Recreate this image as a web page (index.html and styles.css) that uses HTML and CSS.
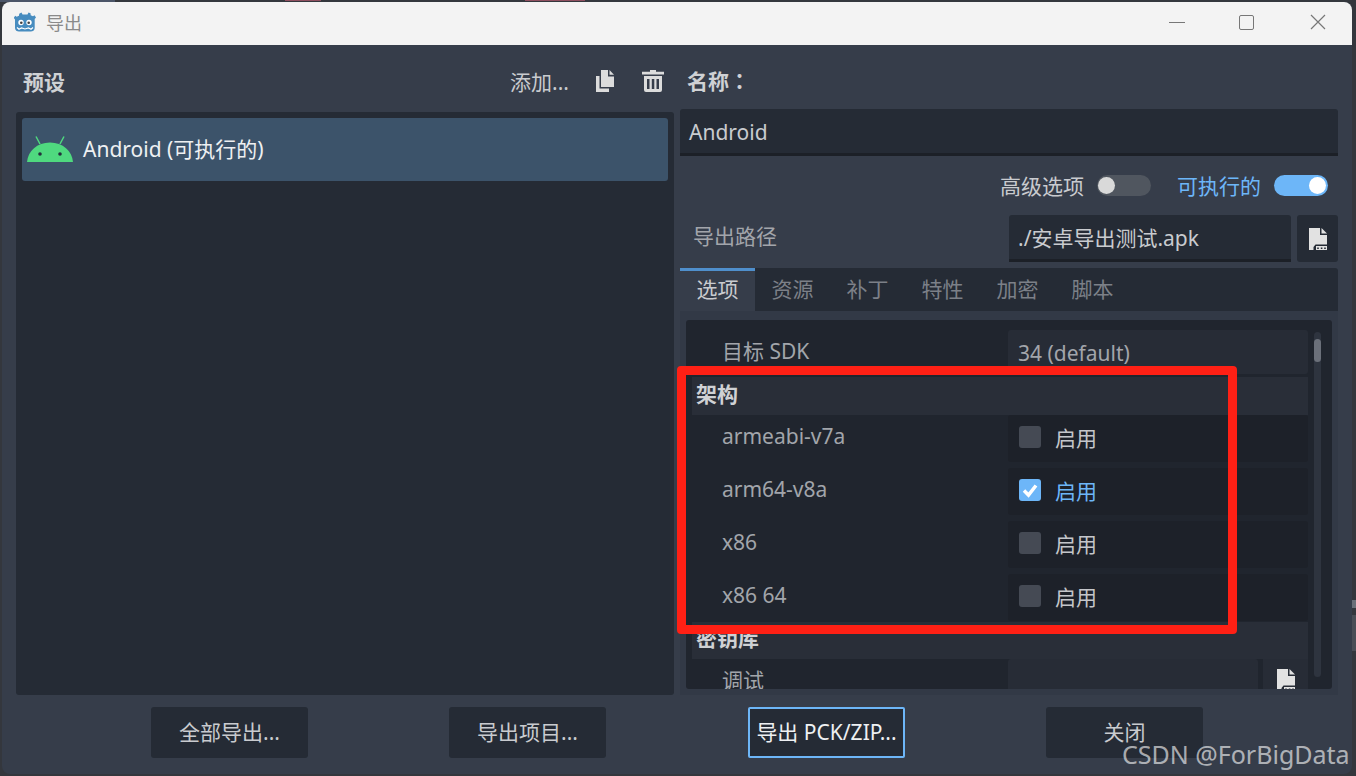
FILE: index.html
```html
<!DOCTYPE html>
<html lang="zh-CN">
<head>
    <meta charset="UTF-8">
    <title>导出</title>
    <link rel="stylesheet" href="styles.css">
</head>
<body>
<svg class="defs" width="0" height="0">
    <symbol id="icon-file" viewBox="0 0 18 22">
        <path d="M0 0H11V7H18V16.500H6.500L4.500 19V22H0Z"/>
        <path d="M12.500 0L18 5.500H12.500Z"/>
        <path d="M7 18H18V22H7Z M8.200 19.500v1.400h1.600v-1.400Z M11.800 19.500v1.400h1.600v-1.400Z M15.200 19.500v1.400h1.600v-1.400Z" fill-rule="evenodd"/>
    </symbol>
</svg>

<div class="window">
    <div class="titlebar">
        <svg class="app-logo" viewBox="0 0 22 20">
            <path fill="#478cbf" d="M7.500 0.500l1 2h5l1-2 2 .8.2 2 2.300 1 1.500-1 1.500 2.200-1.300 1.500V16c0 2.500-2 3.500-4 3.500H5c-2 0-4-1-4-3.500V7.500L-.3 6 1.200 3.800l1.500 1 2.300-1 .2-2Z"/>
            <circle cx="7" cy="10.500" r="2.700" fill="#fff"/>
            <circle cx="15" cy="10.500" r="2.700" fill="#fff"/>
            <circle cx="7.300" cy="10.700" r="1.300" fill="#414042"/>
            <circle cx="14.700" cy="10.700" r="1.300" fill="#414042"/>
            <path fill="none" stroke="#fff" stroke-width="1.200" d="M3 15.500l2 1.800 2.500-1.300 3.500 1 3.500-1 2.500 1.300 2-1.800"/>
        </svg>
        <span class="window-title">导出</span>
        <div class="window-controls">
            <span class="ctl-min"></span>
            <span class="ctl-max"></span>
            <svg class="ctl-close" viewBox="0 0 16 16"><path d="M1 1L15 15M15 1L1 15"/></svg>
        </div>
    </div>

    <div class="content">
        <div class="columns">
            <!-- 预设 -->
            <div class="col-left">
                <div class="preset-head">
                    <strong class="heading">预设</strong>
                    <span class="add-btn">添加...</span>
                    <svg class="tool-icon copy" viewBox="0 0 18 22">
                        <path d="M5 0H12V6.500H18V17H5Z"/>
                        <path d="M13.500 0L18 4.800H13.500Z"/>
                        <path d="M0 6H3.500V18.500H13V22H0Z"/>
                    </svg>
                    <svg class="tool-icon trash" viewBox="0 0 22 22">
                        <path d="M8 0H14V1.800H22V4.500H0V1.800H8Z"/>
                        <path fill-rule="evenodd" d="M2 6H20V20a2 2 0 0 1-2 2H4a2 2 0 0 1-2-2Z M5 9V19H7.500V9Z M9.800 9V19H12.300V9Z M14.500 9V19H17V9Z"/>
                    </svg>
                </div>
                <div class="preset-list">
                    <div class="preset-item">
                        <svg class="android" viewBox="0 0 46 26">
                            <path fill="#4fd97f" d="M0 26C1 15 10 6.500 23 6.500S45 15 46 26Z"/>
                            <path stroke="#4fd97f" stroke-width="1.500" d="M9 0.500L13 8M37 0.500L33 8"/>
                            <circle cx="13" cy="18" r="1.800" fill="#24303c"/>
                            <circle cx="33" cy="18" r="1.800" fill="#24303c"/>
                        </svg>
                        <span>Android (可执行的)</span>
                    </div>
                </div>
            </div>

            <!-- 右侧 -->
            <div class="col-right">
                <strong class="heading name-label">名称<span class="colon" lang="zh-TW">：</span></strong>
                <div class="line-edit name-edit">Android</div>

                <div class="toggles">
                    <span class="toggle-text">高级选项</span>
                    <span class="switch"></span>
                    <span class="toggle-text is-on">可执行的</span>
                    <span class="switch is-on"></span>
                </div>

                <div class="path-row">
                    <span class="path-label">导出路径</span>
                    <div class="line-edit path-edit">./安卓导出测试.apk</div>
                    <div class="file-btn"><svg class="file-icon"><use href="#icon-file"/></svg></div>
                </div>

                <div class="tabs">
                    <span class="tab active">选项</span>
                    <span class="tab">资源</span>
                    <span class="tab">补丁</span>
                    <span class="tab">特性</span>
                    <span class="tab">加密</span>
                    <span class="tab">脚本</span>
                </div>

                <div class="tab-panel">
                    <div class="tree">
                        <div class="tree-body">
                            <div class="row">
                                <span class="row-label">目标 SDK</span>
                                <div class="row-value value-light sdk-value">34 (default)</div>
                            </div>

                            <div class="section first">架构</div>
                            <div class="arch-rows">
                                <div class="row arch">
                                    <span class="row-label">armeabi-v7a</span>
                                    <div class="row-value"><span class="check"></span>启用</div>
                                </div>
                                <div class="row arch">
                                    <span class="row-label">arm64-v8a</span>
                                    <div class="row-value is-on">
                                        <span class="check checked"><svg viewBox="0 0 22 22"><path d="M5 11.500L9.500 16L17 6.500"/></svg></span>启用
                                    </div>
                                </div>
                                <div class="row arch">
                                    <span class="row-label">x86</span>
                                    <div class="row-value"><span class="check"></span>启用</div>
                                </div>
                                <div class="row arch">
                                    <span class="row-label">x86 64</span>
                                    <div class="row-value"><span class="check"></span>启用</div>
                                </div>
                            </div>

                            <div class="section second">密钥库</div>
                            <div class="row debug">
                                <span class="row-label">调试</span>
                                <div class="row-value value-light"></div>
                                <div class="debug-btn"><svg class="file-icon"><use href="#icon-file"/></svg></div>
                            </div>
                        </div>
                        <div class="scrollbar"><span class="grabber"></span></div>
                    </div>
                </div>
            </div>
        </div>

        <div class="actions">
            <span class="btn">全部导出...</span>
            <span class="btn">导出项目...</span>
            <span class="btn focused">导出 PCK/ZIP...</span>
            <span class="btn">关闭</span>
        </div>
    </div>
</div>

<!-- 截图上的标注 -->
<div class="red-box"></div>
<div class="watermark">CSDN @ForBigData</div>
</body>
</html>
```

FILE: styles.css
```css
:root {
    --bg: #363d4a;
    --dark: #252b35;
    --tree: #20252e;
    --text: #c9cbcf;
    --muted: #a2a5ab;
    --blue: #6db6f8;
}

* {
    margin: 0;
    padding: 0;
    box-sizing: border-box;
}

/* 窗口后面露出的编辑器 */
body {
    position: relative;
    width: 1356px;
    height: 776px;
    overflow: hidden;
    padding: 2px 4px 2px 2px;
    background:
        linear-gradient(#8f4f5f, #8f4f5f) 285px 0 / 36px 1px no-repeat,
        linear-gradient(#8f4f5f, #8f4f5f) 525px 0 / 60px 1px no-repeat,
        linear-gradient(#4b5568, #4b5568) 0 0 / 115px 2px no-repeat,
        linear-gradient(#6a6f78, #6a6f78) 1352px 600px / 4px 8px no-repeat,
        linear-gradient(#4a4e56, #4a4e56) 1352px 615px / 4px 36px no-repeat,
        #34373d;
    font-family: "Noto Sans", "Noto Sans CJK SC", sans-serif;
    font-size: 21px;
    color: var(--text);
}

.defs {
    position: absolute;
}

.window {
    width: 1350px;
    height: 772px;
    border-radius: 8px;
    overflow: hidden;
    background: var(--bg);
}

/* 标题栏 */
.titlebar {
    display: flex;
    align-items: center;
    height: 43px;
    padding: 0 0 3px 12px;
    background: #f3f3f3;
}

.app-logo {
    width: 22px;
    height: 20px;
}

.window-title {
    margin-left: 10px;
    font-size: 18px;
    color: #8a8a8a;
}

.window-controls {
    display: flex;
    align-items: center;
    margin-left: auto;
    padding-right: 26px;
}

.ctl-min {
    width: 16px;
    height: 1px;
    background: #777;
    margin-right: 54px;
}

.ctl-max {
    width: 15px;
    height: 15px;
    border: 1.500px solid #777;
    border-radius: 2px;
    margin-right: 56px;
}

.ctl-close {
    width: 16px;
    height: 16px;
    fill: none;
    stroke: #777;
    stroke-width: 1.200;
}

/* 内容 */
.content {
    display: flex;
    flex-direction: column;
    height: 729px;
    padding: 15px 14px 0;
}

.columns {
    display: flex;
    gap: 6px;
    height: 635px;
}

.col-left {
    display: flex;
    flex-direction: column;
    width: 658px;
}

.col-right {
    display: flex;
    flex-direction: column;
    width: 658px;
}

.heading {
    color: #cfd1d4;
    font-size: 21px;
}

.colon {
    font-family: "Noto Sans CJK TC", sans-serif;
}

.preset-head {
    display: flex;
    align-items: center;
    height: 52px;
    padding: 0 10px 10px 7px;
}

.add-btn {
    margin-left: auto;
    margin-right: 27px;
}

.tool-icon {
    fill: #dcdcdc;
    height: 22px;
}

.tool-icon.copy {
    width: 18px;
    margin-right: 28px;
}

.tool-icon.trash {
    width: 22px;
}

.preset-list {
    flex: 1;
    padding: 6px;
    background: var(--dark);
    border-radius: 3px;
}

.preset-item {
    display: flex;
    align-items: center;
    height: 63px;
    padding: 0 0 4px 5px;
    background: #3c536a;
    border-radius: 3px;
    color: #eef0f2;
}

.android {
    width: 46px;
    height: 26px;
    margin-right: 10px;
    margin-top: 3px;
}

.name-label {
    height: 49px;
    padding: 5px 0 0 7px;
}

.line-edit {
    display: flex;
    align-items: center;
    background: var(--dark);
    border-bottom: 3px solid #1c2027;
    border-radius: 3px 3px 0 0;
}

.name-edit {
    height: 47px;
    padding: 2px 0 0 9px;
}

.toggles {
    display: flex;
    align-items: center;
    justify-content: flex-end;
    height: 26px;
    margin-top: 16px;
    padding-right: 10px;
}

.toggle-text {
    margin-right: 13px;
}

.toggle-text.is-on {
    color: var(--blue);
}

.switch {
    position: relative;
    width: 54px;
    height: 21px;
    margin-right: 26px;
    border-radius: 11px;
    background: #50565f;
}

.switch::after {
    content: "";
    position: absolute;
    top: 2px;
    left: 1px;
    width: 17px;
    height: 17px;
    border-radius: 50%;
    background: #d9d9d9;
}

.switch.is-on {
    margin-right: 0;
    background: var(--blue);
}

.switch.is-on::after {
    left: auto;
    right: 2px;
    background: #fff;
}

.path-row {
    display: flex;
    height: 47px;
    margin-top: 17px;
}

.path-label {
    width: 329px;
    padding: 5px 0 0 13px;
    color: var(--muted);
}

.path-edit {
    width: 282px;
    padding-left: 9px;
}

.file-btn {
    display: flex;
    align-items: center;
    justify-content: center;
    width: 41px;
    margin-left: 6px;
    background: var(--dark);
    border-radius: 3px;
}

.file-icon {
    width: 18px;
    height: 22px;
    fill: #e2e2e2;
}

/* 标签页 */
.tabs {
    display: flex;
    height: 43px;
    margin-top: 6px;
    background: var(--dark);
    border-radius: 3px 3px 0 0;
}

.tab {
    width: 75px;
    padding-top: 5px;
    text-align: center;
    color: #7c8088;
}

.tab.active {
    padding-top: 2px;
    border-top: 3px solid #4f8fcc;
    background: var(--bg);
    color: var(--text);
}

.tab-panel {
    flex: 1;
    min-height: 0;
    padding: 9px 6px 6px;
    background: #323946;
}

.tree {
    display: flex;
    height: 100%;
    overflow: hidden;
    padding: 0 11px 0 6px;
    background: var(--tree);
    border-radius: 3px;
}

.tree-body {
    flex: 1;
    min-width: 0;
    padding-top: 10px;
}

.scrollbar {
    width: 7px;
    height: 345px;
    margin: 12px 0 0 6px;
    border-radius: 4px;
    background: #2e343f;
}

.grabber {
    display: block;
    width: 7px;
    height: 23px;
    margin-top: 7px;
    border-radius: 4px;
    background: #6b707a;
}

.row {
    display: flex;
    height: 44px;
}

.row-label {
    width: 316px;
    padding: 5px 0 0 30px;
    color: var(--muted);
}

.row-value {
    display: flex;
    align-items: center;
    flex: 1;
    padding-left: 10px;
    border-radius: 3px;
}

.value-light {
    background: #272c36;
    color: var(--muted);
}

.sdk-value {
    padding-top: 2px;
}

.section {
    padding-left: 4px;
    font-weight: 700;
    background: #292e38;
    color: #cfd1d4;
}

.section.first {
    height: 38px;
    margin-top: 3px;
    line-height: 34px;
}

.section.second {
    height: 37px;
    margin-top: 1px;
    line-height: 33px;
}

.arch-rows {
    display: flex;
    flex-direction: column;
    gap: 6px;
}

.row.arch {
    height: 47px;
}

.arch .row-label {
    padding-top: 7px;
}

.arch .row-value {
    padding: 0 0 4px 11px;
    background: #1d2129;
    color: #c4c6ca;
}

.arch .row-value.is-on {
    color: var(--blue);
}

.check {
    display: flex;
    width: 22px;
    height: 22px;
    margin-right: 14px;
    border-radius: 3px;
    background: #454a54;
}

.check.checked {
    background: var(--blue);
}

.check svg {
    fill: none;
    stroke: #fff;
    stroke-width: 3.500;
}

.debug {
    height: 46px;
}

.debug .row-value {
    flex: none;
    width: 250px;
}

.debug-btn {
    display: flex;
    justify-content: center;
    width: 45px;
    margin-left: 5px;
    padding-top: 10px;
    background: #272c36;
}

/* 底部按钮 */
.actions {
    display: flex;
    gap: 141px;
    padding: 12px 0 0 135px;
}

.btn {
    display: flex;
    align-items: center;
    justify-content: center;
    width: 157px;
    height: 51px;
    padding-bottom: 3px;
    background: var(--dark);
    border-radius: 3px;
    white-space: nowrap;
}

.btn.focused {
    margin-left: 1px;
    border: 2px solid var(--blue);
    border-radius: 2px;
    color: #eef0f2;
}

/* 标注 */
.red-box {
    position: absolute;
    left: 677px;
    top: 366px;
    width: 560px;
    height: 268px;
    border: 9px solid #ff2015;
    border-radius: 4px;
}

.watermark {
    position: absolute;
    left: 1122px;
    top: 737px;
    font-size: 25px;
    color: rgba(255, 255, 255, 0.62);
    white-space: nowrap;
}
```
